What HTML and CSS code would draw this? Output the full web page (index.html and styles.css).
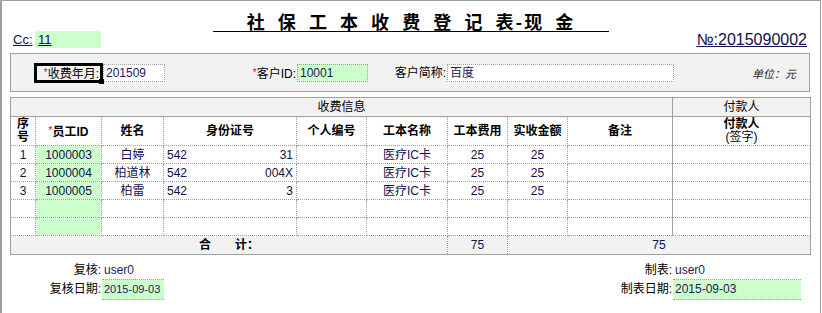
FILE: index.html
```html
<!DOCTYPE html>
<html lang="zh-CN">
<head>
<meta charset="utf-8">
<title>社保工本收费登记表-现金</title>
<link rel="stylesheet" href="styles.css">
</head>
<body>
<div class="frame">
  <div class="title">社 保 工 本 收 费 登 记 表-现 金</div>
  <div class="meta">
    <div class="cc"><span class="cc-label">Cc:</span><span class="cc-val"><u>11</u></span></div>
    <div class="no">№:2015090002</div>
  </div>
  <div class="info">
    <span class="lbl focus"><i class="req">*</i>收费年月:</span><span class="inp w62">201509</span>
    <span class="lbl l2"><i class="req">*</i>客户ID:</span><span class="inp green w71">10001</span>
    <span class="lbl l3">客户简称:</span><span class="inp w227">百度</span>
    <span class="unit">单位：元</span>
  </div>
  <table class="grid">
    <colgroup>
      <col class="c1"><col class="c2"><col class="c3"><col class="c4"><col class="c5">
      <col class="c6"><col class="c7"><col class="c8"><col class="c9"><col class="c10">
    </colgroup>
    <tr class="h1">
      <td colspan="9">收费信息</td>
      <td class="pay">付款人</td>
    </tr>
    <tr class="h2">
      <th>序<br>号</th>
      <th><i class="req">*</i>员工ID</th>
      <th>姓名</th>
      <th>身份证号</th>
      <th>个人编号</th>
      <th>工本名称</th>
      <th>工本费用</th>
      <th>实收金额</th>
      <th>备注</th>
      <th class="pay">付款人<br><span class="sub">(签字)</span></th>
    </tr>
    <tr class="row">
      <td>1</td><td class="green">1000003</td><td>白婷</td>
      <td class="idc"><span>542</span><span>31</span></td>
      <td></td><td>医疗IC卡</td><td class="val">25</td><td class="val">25</td><td></td><td class="pay"></td>
    </tr>
    <tr class="row">
      <td>2</td><td class="green">1000004</td><td>柏道林</td>
      <td class="idc"><span>542</span><span>004X</span></td>
      <td></td><td>医疗IC卡</td><td class="val">25</td><td class="val">25</td><td></td><td class="pay"></td>
    </tr>
    <tr class="row">
      <td>3</td><td class="green">1000005</td><td>柏雷</td>
      <td class="idc"><span>542</span><span>3</span></td>
      <td></td><td>医疗IC卡</td><td class="val">25</td><td class="val">25</td><td></td><td class="pay"></td>
    </tr>
    <tr class="row">
      <td></td><td class="green"></td><td></td><td></td><td></td><td></td><td></td><td></td><td></td><td class="pay"></td>
    </tr>
    <tr class="row">
      <td></td><td class="green"></td><td></td><td></td><td></td><td></td><td></td><td></td><td></td><td class="pay"></td>
    </tr>
    <tr class="total">
      <td colspan="6" class="sum">合&emsp;&emsp;计：</td>
      <td class="val">75</td>
      <td colspan="3" class="val">75</td>
    </tr>
  </table>
  <div class="sign">
    <div class="sg sg-l">
      <span class="k">复核:</span><span class="v">user0</span>
      <span class="k k2">复核日期:</span><span class="v date small">2015-09-03</span>
    </div>
    <div class="sg sg-r">
      <span class="k">制表:</span><span class="v">user0</span>
      <span class="k k2">制表日期:</span><span class="v date">2015-09-03</span>
    </div>
  </div>
</div>
</body>
</html>
```
FILE: styles.css
```css
* { box-sizing: border-box; }
body {
  margin: 0;
  background: #fff;
  font-family: "Liberation Sans", "Noto Sans CJK SC", sans-serif;
  font-size: 12px;
  color: #000;
}
.frame {
  width: 821px;
  height: 313px;
  border-top: 1px solid #a0a0a0;
  border-left: 2px solid #a0a0a0;
  border-right: 1px solid #a0a0a0;
}
.title {
  width: 396px;
  height: 31px;
  margin: 0 auto;
  padding-top: 10px;
  border-bottom: 1px solid #000;
  text-align: center;
  font-family: "Noto Sans CJK SC", sans-serif;
  font-weight: bold;
  font-size: 18px;
  line-height: 20px;
  letter-spacing: 2px;
  word-spacing: 5px;
}
.meta {
  display: flex;
  justify-content: space-between;
  height: 21px;
  padding: 0 13px 0 11px;
}
.cc {
  display: flex;
  align-items: center;
  height: 17px;
  margin-top: -1px;
}
.cc-label {
  width: 22px;
  font-size: 13px;
  text-decoration: underline;
  color: #10104a;
}
.cc-val {
  width: 66px;
  height: 17px;
  padding-left: 3px;
  background: #ccffcc;
  font-size: 13px;
  line-height: 17px;
  color: #10104a;
}
.no {
  margin-top: -1px;
  font-size: 16px;
  line-height: 18px;
  text-decoration: underline;
  color: #10104a;
}
.info {
  display: flex;
  align-items: center;
  width: 800px;
  height: 39px;
  margin-left: 8px;
  padding: 1px 13px 0 23px;
  border: 1px solid #a0a0a0;
  background: #f2f2f2;
}
.lbl {
  text-align: right;
  padding-right: 1px;
  line-height: 18px;
  white-space: nowrap;
}
.focus {
  position: relative;
  width: 69px;
  height: 20px;
  border: 3px solid #000;
  line-height: 14px;
}
.focus::after {
  content: "";
  position: absolute;
  right: -4px;
  bottom: -4px;
  width: 5px;
  height: 5px;
  background: #000;
}
.l2 { width: 132px; }
.l3 { width: 79px; }
.inp {
  height: 18px;
  padding-left: 2px;
  border: 1px dotted #a0a0a0;
  background: #fff;
  line-height: 16px;
  color: #1f1a55;
}
.inp.green { background: #ccffcc; }
.w62 { width: 62px; }
.w71 { width: 71px; }
.w227 { width: 227px; }
.unit {
  margin-left: auto;
  font-style: italic;
  font-size: 11px;
  color: #222;
}
.req {
  color: #ff0000;
  font-style: normal;
  font-size: 10px;
  font-weight: normal;
  vertical-align: 2px;
}
.grid {
  width: 800px;
  margin: 5px 0 0 8px;
  border-collapse: collapse;
  table-layout: fixed;
  border: 1px solid #a0a0a0;
}
.c1 { width: 25px; }
.c2 { width: 66px; }
.c3 { width: 62px; }
.c4 { width: 133px; }
.c5 { width: 70px; }
.c6 { width: 81px; }
.c7 { width: 60px; }
.c8 { width: 60px; }
.c9 { width: 105px; }
.c10 { width: 138px; }
.grid td, .grid th {
  padding: 0;
  border: 1px dotted #a0a0a0;
  text-align: center;
  font-weight: normal;
  white-space: nowrap;
  overflow: hidden;
  line-height: 14px;
}
.grid .pay { border-left: 1px solid #a0a0a0; }
.h1 td {
  height: 19px;
  background: #f2f2f2;
  border-bottom: 1px solid #a0a0a0;
}
.grid .h2 th {
  height: 29px;
  font-weight: bold;
  line-height: 13px;
}
.h2 .sub { font-weight: normal; }
.row td {
  height: 18px;
  color: #10104a;
}
.row td.green { background: #ccffcc; }
.idc span:first-child { float: left; padding-left: 3px; }
.idc span:last-child { float: right; padding-right: 3px; }
.total td {
  height: 19px;
  background: #f2f2f2;
  border-right: 1px dotted #a0a0a0;
}
.grid .sum {
  font-weight: bold;
}
.val { color: #10104a; }
.sign {
  display: flex;
  justify-content: space-between;
  margin-top: 7px;
  padding-right: 19px;
}
.sg { display: grid; }
.sg-l { grid-template-columns: 100px 62px; }
.sg-r { grid-template-columns: auto 128px; }
.k {
  text-align: right;
  line-height: 17px;
  padding-right: 1px;
}
.k2 { line-height: 21px; }
.v {
  line-height: 17px;
  padding-left: 2px;
  color: #1f1a55;
  white-space: nowrap;
}
.date {
  height: 21px;
  line-height: 19px;
  border-top: 1px dotted #a0a0a0;
  border-bottom: 1px dotted #a0a0a0;
  background: #ccffcc;
}
.date.small { font-size: 11px; }
```
